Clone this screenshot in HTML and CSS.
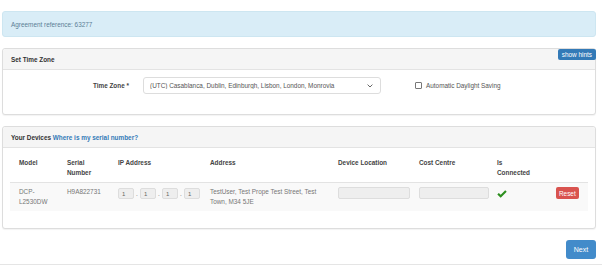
FILE: index.html
```html
<!DOCTYPE html>
<html lang="en">
<head>
<meta charset="UTF-8">
<title>Devices</title>
<link rel="stylesheet" href="styles.css">
</head>
<body>

<div class="alert">Agreement reference: 63277</div>

<div class="panel">
    <div class="panel-heading">
        <span class="panel-title">Set Time Zone</span>
        <button class="btn btn-hints">show hints</button>
    </div>
    <div class="panel-body tz-body">
        <label class="tz-label">Time Zone *</label>
        <div class="select-wrap">
            <select class="select">
                <option>(UTC) Casablanca, Dublin, Edinburgh, Lisbon, London, Monrovia</option>
            </select>
            <svg class="chevron" width="6" height="4" viewBox="0 0 6 4"><path d="M0.6 0.6 L3 3 L5.4 0.6" fill="none" stroke="#555" stroke-width="0.9"/></svg>
        </div>
        <label class="check"><span class="box"></span>Automatic Daylight Saving</label>
    </div>
</div>

<div class="panel">
    <div class="panel-heading">
        <span class="panel-title">Your Devices <a href="#">Where is my serial number?</a></span>
    </div>
    <div class="panel-body">
        <table class="devices">
            <colgroup>
                <col style="width:57px"><col style="width:51px"><col style="width:92px"><col style="width:128px">
                <col style="width:81px"><col style="width:78px"><col style="width:59px"><col>
            </colgroup>
            <thead>
                <tr>
                    <th>Model</th>
                    <th>Serial<br>Number</th>
                    <th>IP Address</th>
                    <th>Address</th>
                    <th>Device Location</th>
                    <th>Cost Centre</th>
                    <th>Is<br>Connected</th>
                    <th></th>
                </tr>
            </thead>
            <tbody>
                <tr>
                    <td>DCP-<br>L2530DW</td>
                    <td>H9A822731</td>
                    <td>
                        <div class="ip">
                            <input class="octet" value="1" disabled><span>.</span>
                            <input class="octet" value="1" disabled><span>.</span>
                            <input class="octet" value="1" disabled><span>.</span>
                            <input class="octet" value="1" disabled>
                        </div>
                    </td>
                    <td>TestUser, Test Prope Test Street, Test Town, M34 5JE</td>
                    <td><input class="field loc" disabled></td>
                    <td><input class="field cost" disabled></td>
                    <td>
                        <svg class="tick" width="10" height="8" viewBox="0 0 10 8"><path d="M0.3 4.4 L1.8 2.9 L3.7 4.8 L8.2 0.3 L9.7 1.8 L3.7 7.8 Z" fill="#2d8f1f"/></svg>
                    </td>
                    <td><button class="btn btn-reset">Reset</button></td>
                </tr>
            </tbody>
        </table>
    </div>
</div>

<div class="actions">
    <button class="btn btn-next">Next</button>
</div>
<div class="footer-line"></div>

</body>
</html>
```

FILE: styles.css
```css
body {
    margin: 0;
    padding: 11px 6px 0 2px;
    font-family: "Liberation Sans", Arial, sans-serif;
    font-size: 6.4px;
    line-height: 9px;
    color: #333;
    background: #fff;
}
.alert {
    box-sizing: border-box;
    height: 26px;
    display: flex;
    align-items: center;
    padding: 0 8px;
    background-color: #d9edf7;
    border: 1px solid #cde6f1;
    border-radius: 3px;
    color: #5c7f96;
    margin-bottom: 11px;
}
.panel {
    background: #fff;
    border: 1px solid #ddd;
    border-radius: 3px;
    margin-bottom: 11px;
    box-shadow: 0 1px 1px rgba(0, 0, 0, 0.05);
}
.panel-heading {
    display: flex;
    justify-content: space-between;
    height: 20px;
    padding-left: 8px;
    background-color: #f5f5f5;
    border-bottom: 1px solid #e3e3e3;
    border-radius: 3px 3px 0 0;
}
.panel-title {
    align-self: center;
    font-weight: bold;
    color: #333;
}
.panel-title a {
    color: #337ab7;
    text-decoration: none;
}
.btn {
    font-family: inherit;
    border: none;
    cursor: pointer;
    color: #fff;
    padding: 0;
}
.btn-hints {
    align-self: flex-start;
    height: 11px;
    padding: 0 4px;
    margin-right: -1px;
    font-size: 6.4px;
    background-color: #337ab7;
    border-radius: 2px;
}
.panel-body {
    padding: 7px;
}
.tz-body {
    display: flex;
    align-items: center;
    padding: 7px 0 20px;
}
.tz-label {
    width: 126px;
    text-align: right;
    font-weight: bold;
    color: #444;
}
.select-wrap {
    position: relative;
    margin-left: 14px;
}
.select {
    appearance: none;
    -webkit-appearance: none;
    box-sizing: border-box;
    width: 238px;
    height: 17px;
    padding: 0 6px;
    font-family: inherit;
    font-size: 6.4px;
    color: #555;
    background: #fff;
    border: 1px solid #ddd;
    border-radius: 3px;
}
.chevron {
    position: absolute;
    right: 8px;
    top: 7px;
}
.check {
    display: flex;
    align-items: center;
    margin-left: 34px;
    color: #555;
}
.check .box {
    width: 5px;
    height: 5px;
    border: 1px solid #777;
    border-radius: 1px;
    margin-right: 4px;
}
.devices {
    width: 100%;
    table-layout: fixed;
    border-collapse: collapse;
    margin-bottom: 10px;
}
.devices th {
    text-align: left;
    vertical-align: top;
    padding: 3px 8px 4px 0;
    line-height: 10px;
    font-weight: bold;
    color: #444;
    border-bottom: 1px solid #e3e3e3;
}
.devices td {
    vertical-align: top;
    padding: 4px 8px 5px 0;
    line-height: 9.5px;
    color: #777;
    background-color: #f9f9f9;
}
.devices th:first-child,
.devices td:first-child {
    padding-left: 9px;
}
.ip {
    display: flex;
    align-items: center;
    margin-top: 1px;
}
.ip span {
    width: 6px;
    text-align: center;
    color: #777;
}
.octet {
    box-sizing: border-box;
    width: 16px;
    height: 11px;
    padding: 0 0 0 3px;
    font-family: inherit;
    font-size: 6px;
    color: #666;
    background: #eee;
    border: 1px solid #ddd;
    border-radius: 2px;
}
.field {
    box-sizing: border-box;
    height: 12px;
    background: #eee;
    border: 1px solid #ddd;
    border-radius: 2px;
    padding: 0;
}
.loc {
    width: 72px;
}
.cost {
    width: 70px;
}
.tick {
    display: block;
    margin-top: 3px;
}
.btn-reset {
    height: 12px;
    padding: 0 3px;
    font-size: 6.4px;
    background-color: #d9534f;
    border-radius: 2px;
}
.actions {
    display: flex;
    justify-content: flex-end;
}
.btn-next {
    width: 30px;
    height: 19px;
    font-size: 7px;
    background-color: #428bca;
    border-radius: 3px;
}
.footer-line {
    margin: 5px -6px 0 -2px;
    border-top: 1px solid #e5e5e5;
}
```
